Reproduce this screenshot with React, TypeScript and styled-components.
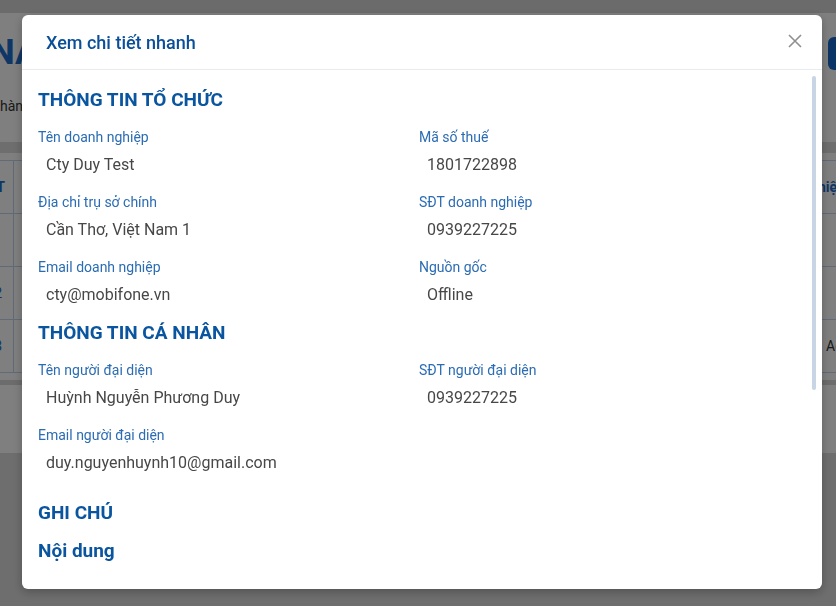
import React from "react"
import styled, { createGlobalStyle } from "styled-components"

const GlobalStyle = createGlobalStyle`
  html, body {
    margin: 0;
    padding: 0;
    width: 836px;
    height: 606px;
    overflow: hidden;
    background: #dcdcdc;
    font-family: Roboto, "Noto Sans", Arial, sans-serif;
  }
`;

/* ---------- page behind the modal ---------- */

const Page = styled.div`
  display: flex;
  flex-direction: column;
  width: 836px;
  height: 606px;
`;

const TopStrip = styled.div`
  height: 13px;
  background: #d6d6d6;
`;

const Card = styled.div`
  background: #fff;
  height: 440px;
  overflow: hidden;
  display: flex;
  flex-direction: column;
`;

const TitleRow = styled.div`
  display: flex;
  align-items: center;
  justify-content: space-between;
  height: 42px;
  margin-top: 19px;
`;

const PageTitle = styled.h1`
  margin: 0 0 0 -10px;
  font-size: 35px;
  line-height: 42px;
  font-weight: 700;
  color: #1c6dcc;
`;

const AddButton = styled.button`
  width: 60px;
  height: 33px;
  margin-right: -52px;
  border: none;
  border-radius: 6px;
  background: #1769cc;
`;

const Subtitle = styled.div`
  margin: 22px 0 0 0;
  font-size: 14px;
  line-height: 20px;
  color: #333;
`;

const Band = styled.div`
  height: 11px;
  margin-top: 26px;
  background: #dcdcdc;
`;

const TableWrap = styled.div`
  margin: 7px 0 0 -28px;
  border-top: 1px solid #c2d6ee;
`;

const TRow = styled.div<{ $h: number }>`
  display: grid;
  grid-template-columns: 42px 796px 200px;
  height: ${p => p.$h}px;
  border-bottom: 1px solid #c2d6ee;
`;

const TCell = styled.div<{ $head?: boolean; $pad?: number; $right?: boolean }>`
  display: flex;
  align-items: center;
  justify-content: ${p => (p.$right ? "flex-end" : "flex-start")};
  padding: ${p => (p.$right ? `0 ${p.$pad ?? 0}px 0 0` : `0 0 0 ${p.$pad ?? 0}px`)};
  border-right: 1px solid #c2d6ee;
  font-size: 14px;
  font-weight: ${p => (p.$head ? 700 : 400)};
  color: ${p => (p.$head ? "#1c6dcc" : "#333")};
  white-space: nowrap;
`;

const NumCell = styled(TCell)`
  color: #1c6dcc;
`;

const ScrollBand = styled.div`
  height: 5px;
  margin-top: 7px;
  background: #d8d8d8;
`;

/* ---------- modal ---------- */

const Overlay = styled.div`
  position: fixed;
  inset: 0;
  background: rgba(0, 0, 0, 0.5);
`;

const Modal = styled.div`
  position: fixed;
  left: 22px;
  top: 15px;
  width: 800px;
  height: 574px;
  background: #fff;
  border-radius: 6px;
  box-shadow: 0 3px 10px rgba(0, 0, 0, 0.25);
  display: flex;
  flex-direction: column;
  overflow: hidden;
`;

const ModalHeader = styled.div`
  height: 54px;
  display: flex;
  align-items: center;
  justify-content: space-between;
  padding: 0 20px 0 24px;
  border-bottom: 1px solid #e9ecef;
`;

const ModalTitle = styled.h5`
  margin: 0;
  font-size: 18px;
  font-weight: 500;
  color: #0b4f99;
`;

const CloseBtn = styled.button`
  display: flex;
  padding: 0;
  margin-top: -2px;
  border: none;
  background: transparent;
  cursor: pointer;
`;

const ModalBody = styled.div`
  flex: 1;
  overflow: hidden;
  padding: 18px 22px 0 16px;
`;

const Thumb = styled.div`
  position: absolute;
  right: 6px;
  top: 61px;
  width: 4.5px;
  height: 314px;
  border-radius: 3px;
  background: #c8d5e4;
`;

const Heading = styled.h3<{ $top?: number }>`
  margin: ${p => p.$top ?? 0}px 0 0;
  font-size: 19px;
  line-height: 24px;
  font-weight: 700;
  color: #0a559f;
`;

const FieldGrid = styled.div`
  display: grid;
  grid-template-columns: 1fr 1fr;
  row-gap: 15px;
  margin-top: 15px;
`;

const Field = styled.div`
  display: flex;
  flex-direction: column;
`;

const Label = styled.span`
  font-size: 14px;
  line-height: 20px;
  color: #2b6cb3;
`;

const Value = styled.span`
  margin-top: 6px;
  padding-left: 8px;
  font-size: 16px;
  line-height: 24px;
  color: #474747;
`;

const orgFields = [
  ["Tên doanh nghiệp", "Cty Duy Test"],
  ["Mã số thuế", "1801722898"],
  ["Địa chỉ trụ sở chính", "Cần Thơ, Việt Nam 1"],
  ["SĐT doanh nghiệp", "0939227225"],
  ["Email doanh nghiệp", "cty@mobifone.vn"],
  ["Nguồn gốc", "Offline"],
];

const personFields = [
  ["Tên người đại diện", "Huỳnh Nguyễn Phương Duy"],
  ["SĐT người đại diện", "0939227225"],
  ["Email người đại diện", "duy.nguyenhuynh10@gmail.com"],
];

const rows = [
  { no: "1", last: "" },
  { no: "2", last: "" },
  { no: "3", last: "Active" },
];

const Fields = ({ items }: { items: string[][] }) => (
  <FieldGrid>
    {items.map(([label, value]) => (
      <Field key={label}>
        <Label>{label}</Label>
        <Value>{value}</Value>
      </Field>
    ))}
  </FieldGrid>
);

export default function App() {
  return (
    <>
      <GlobalStyle />
      <Page>
        <TopStrip />
        <Card>
          <TitleRow>
            <PageTitle>NA</PageTitle>
            <AddButton />
          </TitleRow>
          <Subtitle>hàng</Subtitle>
          <Band />
          <TableWrap>
            <TRow $h={52}>
              <TCell $head $right $pad={8}>STT</TCell>
              <TCell $head />
              <TCell $head $pad={8}>hiệu lực</TCell>
            </TRow>
            {rows.map(r => (
              <TRow $h={52} key={r.no}>
                <NumCell $right $pad={11}>{r.no}</NumCell>
                <TCell />
                <TCell $pad={16}>{r.last}</TCell>
              </TRow>
            ))}
          </TableWrap>
          <ScrollBand />
        </Card>
      </Page>

      <Overlay />
      <Modal>
        <ModalHeader>
          <ModalTitle>Xem chi tiết nhanh</ModalTitle>
          <CloseBtn aria-label="Đóng">
            <svg width="14" height="14" viewBox="0 0 14 14">
              <path d="M1 1L13 13M13 1L1 13" stroke="#8f8f8f" strokeWidth="1.6" />
            </svg>
          </CloseBtn>
        </ModalHeader>
        <ModalBody>
          <Heading>THÔNG TIN TỔ CHỨC</Heading>
          <Fields items={orgFields} />
          <Heading $top={14}>THÔNG TIN CÁ NHÂN</Heading>
          <Fields items={personFields} />
          <Heading $top={26}>GHI CHÚ</Heading>
          <Heading $top={14}>Nội dung</Heading>
        </ModalBody>
        <Thumb />
      </Modal>
    </>
  )
}
